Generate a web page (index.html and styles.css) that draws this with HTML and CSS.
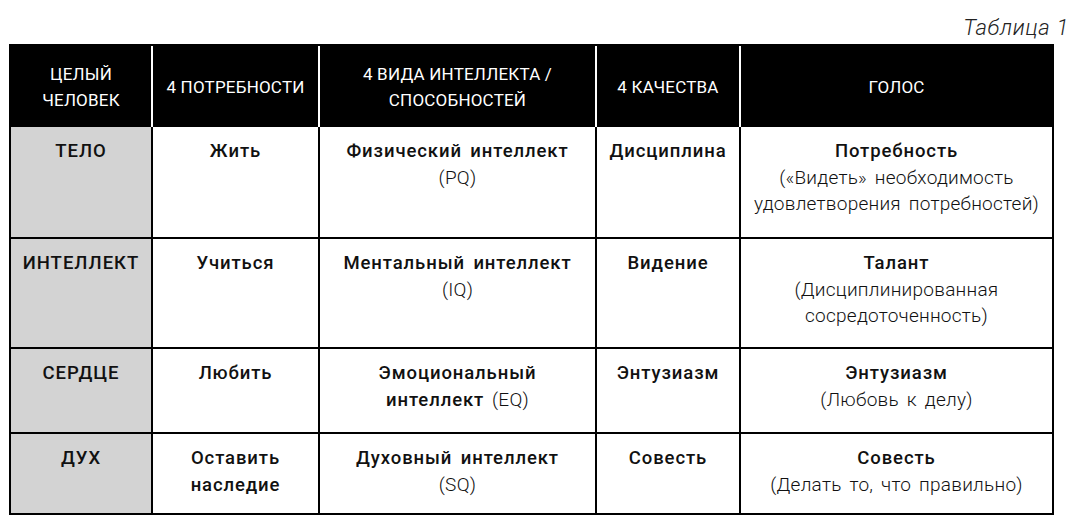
FILE: index.html
```html
<!DOCTYPE html>
<html lang="ru">
<head>
<meta charset="utf-8">
<link rel="stylesheet" href="styles.css">
</head>
<body>
<div class="page">
  <div class="caption">Таблица 1</div>
  <table class="grid">
    <colgroup>
      <col class="c1"><col class="c2"><col class="c3"><col class="c4"><col class="c5">
    </colgroup>
    <thead>
      <tr>
        <th>ЦЕЛЫЙ<br>ЧЕЛОВЕК</th>
        <th>4 ПОТРЕБНОСТИ</th>
        <th>4 ВИДА ИНТЕЛЛЕКТА /<br>СПОСОБНОСТЕЙ</th>
        <th>4 КАЧЕСТВА</th>
        <th>ГОЛОС</th>
      </tr>
    </thead>
    <tbody>
      <tr class="r1">
        <td class="side"><b>ТЕЛО</b></td>
        <td><b>Жить</b></td>
        <td><b>Физический интеллект</b><br>(PQ)</td>
        <td><b>Дисциплина</b></td>
        <td><b>Потребность</b><br>(«Видеть» необходимость<br>удовлетворения потребностей)</td>
      </tr>
      <tr class="r2">
        <td class="side"><b>ИНТЕЛЛЕКТ</b></td>
        <td><b>Учиться</b></td>
        <td><b>Ментальный интеллект</b><br>(IQ)</td>
        <td><b>Видение</b></td>
        <td><b>Талант</b><br>(Дисциплинированная<br>сосредоточенность)</td>
      </tr>
      <tr class="r3">
        <td class="side"><b>СЕРДЦЕ</b></td>
        <td><b>Любить</b></td>
        <td><b>Эмоциональный<br>интеллект</b> (EQ)</td>
        <td><b>Энтузиазм</b></td>
        <td><b>Энтузиазм</b><br>(Любовь к делу)</td>
      </tr>
      <tr class="r4">
        <td class="side"><b>ДУХ</b></td>
        <td><b>Оставить<br>наследие</b></td>
        <td><b>Духовный интеллект</b><br>(SQ)</td>
        <td><b>Совесть</b></td>
        <td><b>Совесть</b><br>(Делать то, что правильно)</td>
      </tr>
    </tbody>
  </table>
</div>
</body>
</html>
```
FILE: styles.css
```css
html, body {
  margin: 0;
  padding: 0;
  background: #ffffff;
}
.page {
  width: 1079px;
  height: 526px;
  padding: 0 0 0 9px;
  box-sizing: border-box;
  font-family: Roboto, "Liberation Sans", sans-serif;
  color: #111;
}
.caption {
  text-align: right;
  font-style: italic;
  font-weight: 300;
  font-size: 22px;
  letter-spacing: 0.7px;
  line-height: 24px;
  padding: 16px 10px 0 0;
  height: 24px;
  margin-bottom: 4px;
  color: #222;
}
.grid {
  width: 1045px;
  table-layout: fixed;
  border-collapse: separate;
  border-spacing: 0;
  border: 2px solid #000;
}
.c1 { width: 142px; }
.c2 { width: 167px; }
.c3 { width: 277px; }
.c4 { width: 144px; }
.c5 { width: 311px; }
.grid th {
  background: #000;
  color: #fff;
  font-weight: normal;
  font-size: 17px;
  letter-spacing: 0.2px;
  line-height: 26px;
  height: 81px;
  padding: 0 3px;
  text-align: center;
  vertical-align: middle;
  border-right: 2px solid #fff;
}
.grid th:last-child { border-right: none; }
.grid td {
  font-size: 19px;
  font-weight: 300;
  letter-spacing: 0.25px;
  word-spacing: 3px;
  line-height: 26.5px;
  text-align: center;
  vertical-align: top;
  padding: 11px 3px 0;
  border-right: 2px solid #000;
  border-bottom: 2px solid #000;
}
.grid td:last-child { border-right: none; }
.grid tr:last-child td { border-bottom: none; }
.grid td b { font-weight: 500; font-size: 18.5px; letter-spacing: 0.9px; word-spacing: 3px; }
.grid td.side { background: #d3d3d3; }
.grid td.side b { letter-spacing: 1px; }
.r1 td { height: 99px; }
.r2 td { height: 97px; }
.r3 td { height: 72px; }
.r4 td { height: 68px; }
```
